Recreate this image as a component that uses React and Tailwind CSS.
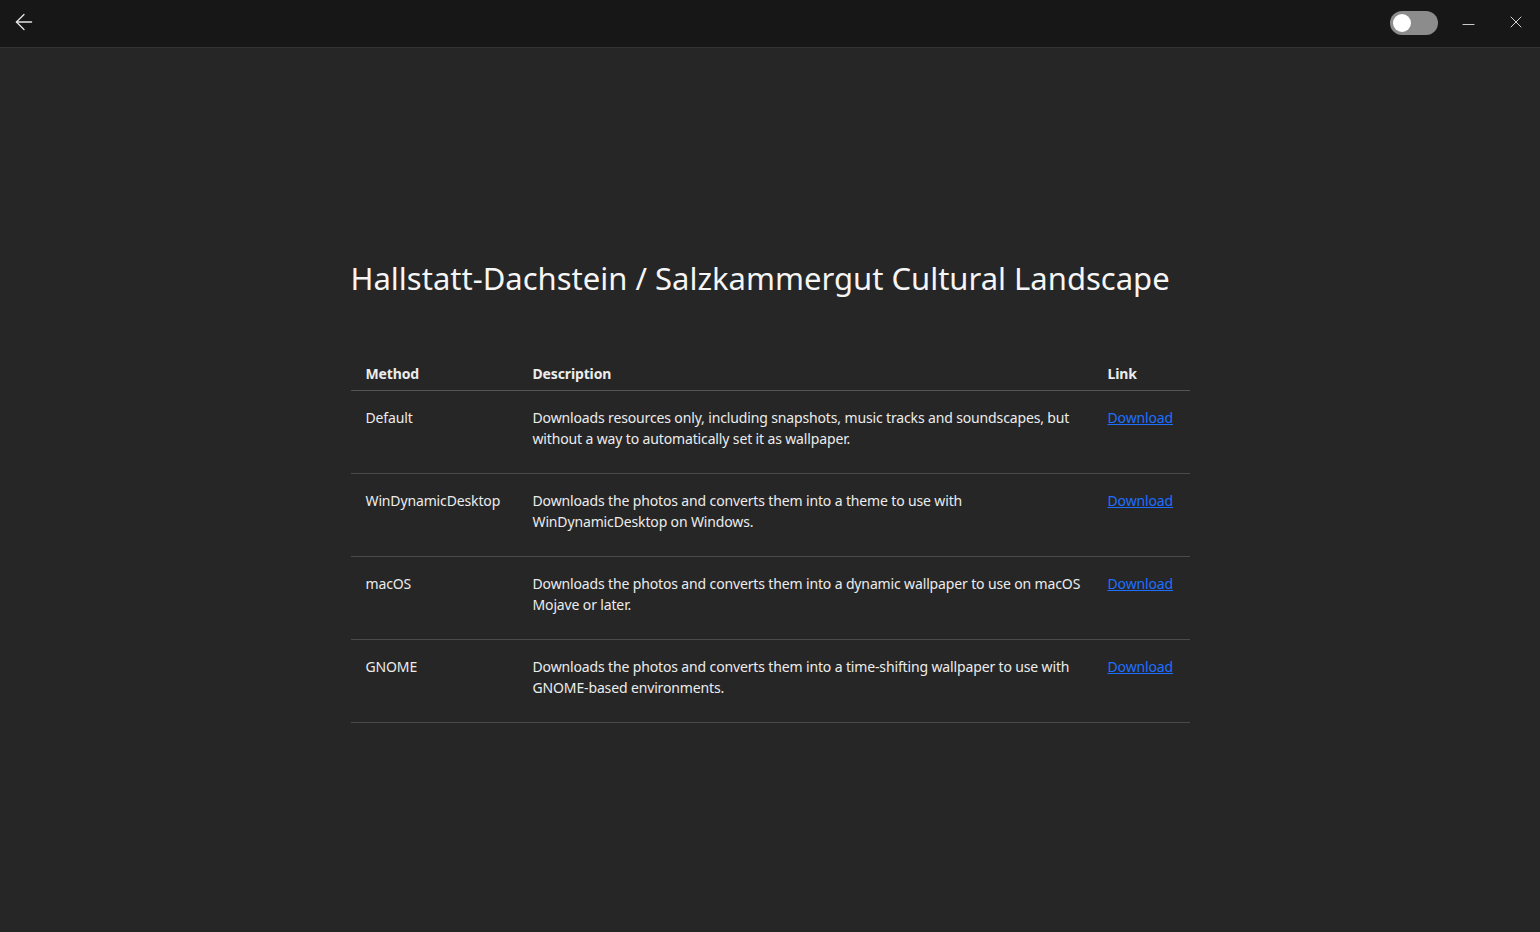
import { ArrowLeft, Minus, X } from 'lucide-react';

const rows = [
  {
    method: 'Default',
    lines: [
      'Downloads resources only, including snapshots, music tracks and soundscapes, but',
      'without a way to automatically set it as wallpaper.',
    ],
  },
  {
    method: 'WinDynamicDesktop',
    lines: ['Downloads the photos and converts them into a theme to use with', 'WinDynamicDesktop on Windows.'],
  },
  {
    method: 'macOS',
    lines: ['Downloads the photos and converts them into a dynamic wallpaper to use on macOS', 'Mojave or later.'],
  },
  {
    method: 'GNOME',
    lines: ['Downloads the photos and converts them into a time-shifting wallpaper to use with', 'GNOME-based environments.'],
  },
];

export default function App() {
  return (
    <div className="min-h-screen flex flex-col bg-[#262626] text-white" style={{ fontFamily: '"Noto Sans", sans-serif' }}>
      {/* title bar */}
      <div className="h-[48px] shrink-0 flex items-center justify-between bg-[#171717] border-b border-[#333333]">
        <button className="w-[48px] h-[44px] flex items-center justify-center text-[#e5e5e5] -mt-[3px]">
          <ArrowLeft className="h-[26px] w-[26px]" strokeWidth={1.2} />
        </button>
        <div className="flex items-center h-full">
          <div className="w-[48px] h-[24px] rounded-full bg-[#8c8c8c] flex items-center px-[3px] mr-[6px] -mt-[2px]">
            <div className="w-[18px] h-[18px] rounded-full bg-white" />
          </div>
          <div className="w-[48px] h-full flex items-center justify-center text-[#e5e5e5]">
            <Minus className="h-[19px] w-[19px] mt-[2px]" strokeWidth={1.1} />
          </div>
          <div className="w-[48px] h-full flex items-center justify-center text-[#e5e5e5]">
            <X className="h-[20px] w-[20px] -mt-[3px]" strokeWidth={1.1} />
          </div>
        </div>
      </div>

      {/* content */}
      <div className="flex-1 flex items-center justify-center pt-[1px]">
        <div className="w-[839px]">
          <h1 className="text-[31px] leading-[40px] font-normal text-[#f5f5f5] mb-[49px] whitespace-nowrap">
            Hallstatt-Dachstein / Salzkammergut Cultural Landscape
          </h1>
          <table className="w-full table-fixed border-collapse text-[14px] leading-[21px] text-[#ececec] tracking-[-0.14px]">
            <colgroup>
              <col className="w-[166px]" />
              <col />
              <col className="w-[98px]" />
            </colgroup>
            <thead>
              <tr className="border-b border-[#555555]">
                <th className="text-left font-bold px-[15px] pt-[16px] pb-[6px]">Method</th>
                <th className="text-left font-bold px-[16px] pt-[16px] pb-[6px]">Description</th>
                <th className="text-left font-bold px-[16px] pt-[16px] pb-[6px]">Link</th>
              </tr>
            </thead>
            <tbody>
              {rows.map((r) => (
                <tr key={r.method} className="border-b border-[#4a4a4a] align-top">
                  <td className="px-[15px] pt-[16px] pb-[24px] whitespace-nowrap">{r.method}</td>
                  <td className="px-[16px] pt-[16px] pb-[24px]">
                    {r.lines.map((l) => (
                      <div key={l} className="whitespace-nowrap">
                        {l}
                      </div>
                    ))}
                  </td>
                  <td className="px-[16px] pt-[16px] pb-[24px]">
                    <a href="#" className="text-[#1f6fff] underline">
                      Download
                    </a>
                  </td>
                </tr>
              ))}
            </tbody>
          </table>
        </div>
      </div>
    </div>
  );
}
